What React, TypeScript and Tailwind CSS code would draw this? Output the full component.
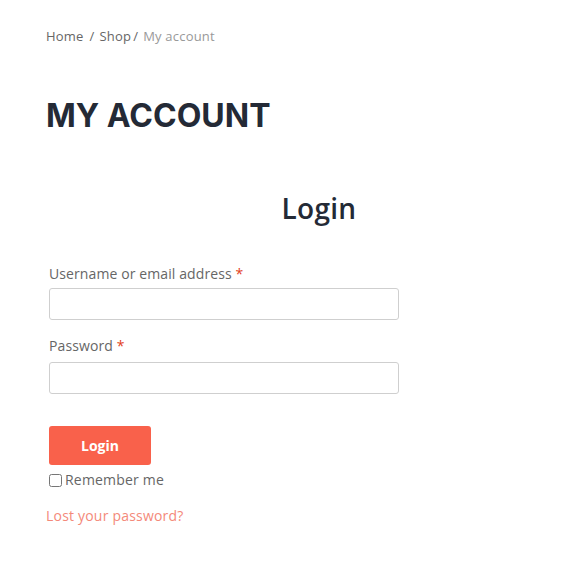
import React from "react";

export default function App() {
  const body = { fontFamily: "'Open Sans', 'Liberation Sans', sans-serif" };
  return (
    <div className="w-[562px] h-[562px] overflow-hidden bg-white" style={body}>
      <div className="pl-[46px] pt-[28px]">
        <nav className="text-[13px] leading-[16px] text-[#666] tracking-[0.2px]">
          <span>Home</span>
          <span className="ml-[6px] mr-[5px]">/</span>
          <span>Shop</span>
          <span className="ml-[2px] mr-[5px]">/</span>
          <span className="text-[#999]">My account</span>
        </nav>
        <h1
          className="mt-[52px] text-[32px] leading-[40px] font-bold text-[#242a36]"
          style={{ fontFamily: "Inter, 'Liberation Sans', sans-serif" }}
        >
          MY ACCOUNT
        </h1>
        <div className="w-[546px] mt-[55px]">
          <h2
            className="text-center text-[28px] leading-[34px] font-semibold text-[#242a36] tracking-[0.3px]"
            style={{ fontFamily: "'Open Sans', sans-serif" }}
          >
            Login
          </h2>
        </div>
        <form className="mt-[40px] pl-[3px] w-[353px]">
          <label className="block text-[14px] leading-[18px] text-[#666] tracking-[0.1px]">
            Username or email address <span className="text-[#e2401c]">*</span>
          </label>
          <input className="mt-[5px] block w-[350px] h-[32px] border border-[#cfcfcf] rounded-[3px]" />
          <label className="mt-[17px] block text-[14px] leading-[18px] text-[#666] tracking-[0.1px]">
            Password <span className="text-[#e2401c]">*</span>
          </label>
          <input
            type="password"
            className="mt-[7px] block w-[350px] h-[32px] border border-[#cfcfcf] rounded-[3px]"
          />
          <button
            type="button"
            className="mt-[32px] block w-[102px] h-[39px] bg-[#f9614b] rounded-[3px] text-white text-[14px] font-bold"
            style={{ fontFamily: "'Open Sans', sans-serif" }}
          >
            Login
          </button>
          <label className="mt-[6px] flex items-center text-[14px] leading-[18px] text-[#666] tracking-[0.2px]">
            <input type="checkbox" className="w-[13px] h-[13px] mr-[3px]" />
            Remember me
          </label>
        </form>
        <div className="mt-[18px] text-[14px] leading-[18px] text-[#f4897a] tracking-[0.2px]">
          Lost your password?
        </div>
      </div>
    </div>
  );
}
